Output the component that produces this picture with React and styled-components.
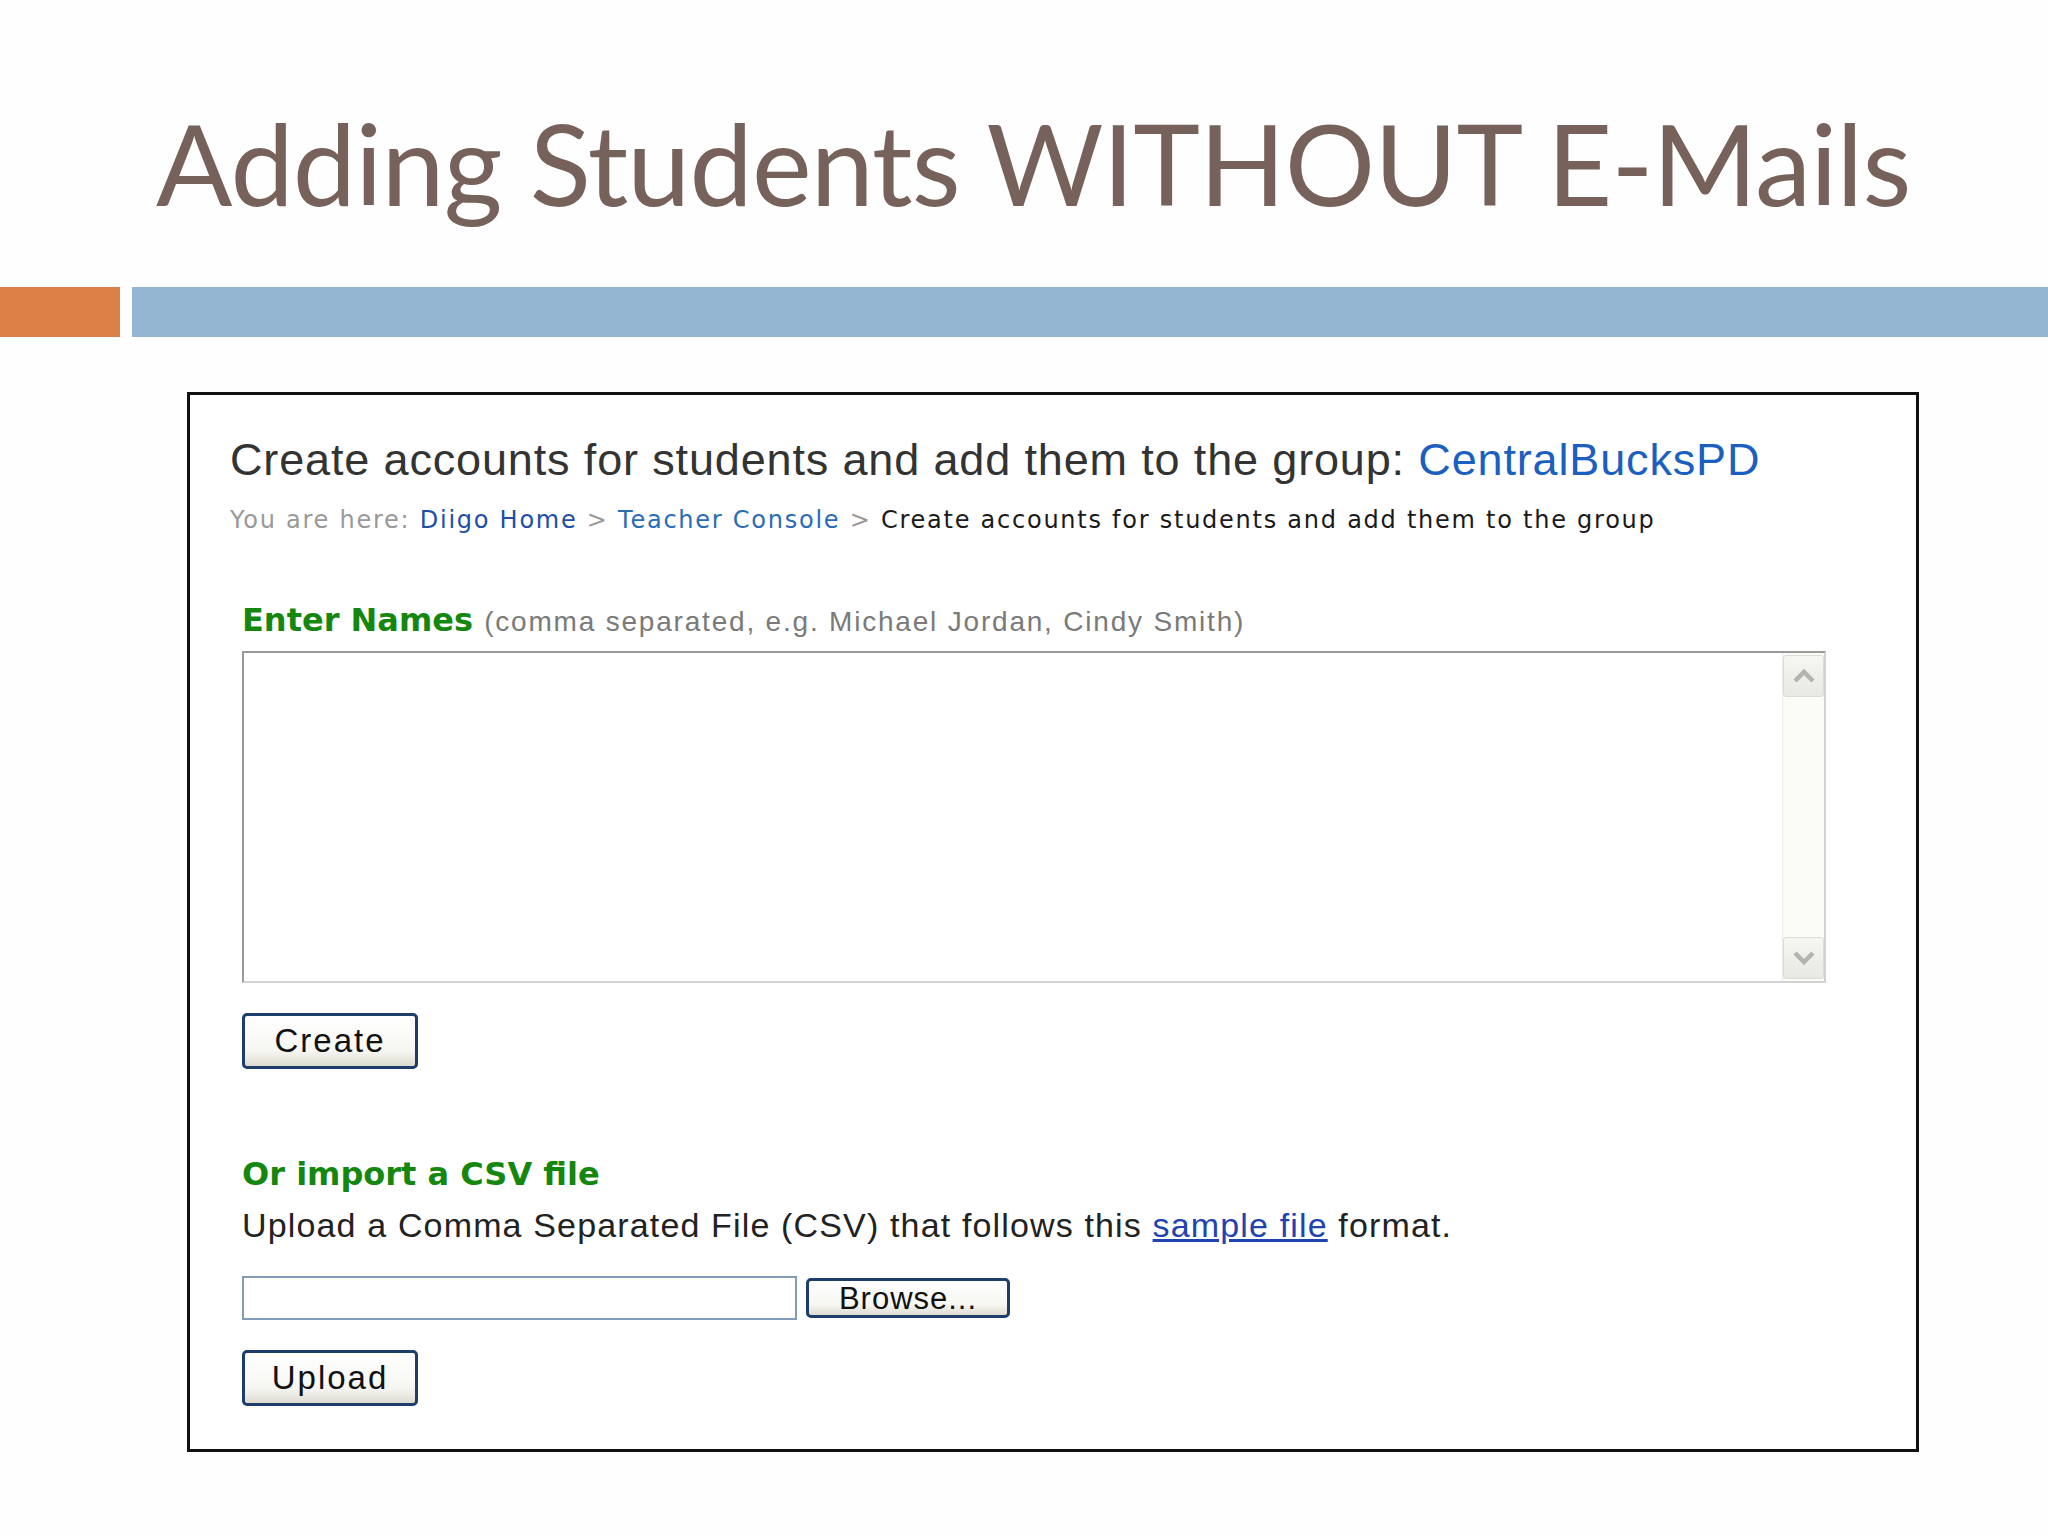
import React from 'react'
import styled, { createGlobalStyle } from 'styled-components'

const GlobalStyle = createGlobalStyle`
  body {
    margin: 0;
    background: #fefefe;
  }
`

const Slide = styled.div`
  width: 2048px;
  height: 1536px;
  overflow: hidden;
  background: #fefefe;
`

const Title = styled.h1`
  margin: 0;
  padding: 106px 0 0 156px;
  font-family: Lato, "Open Sans", sans-serif;
  font-weight: 400;
  font-size: 113px;
  line-height: 113px;
  letter-spacing: -0.85px;
  color: #76625a;
  white-space: nowrap;
`

const AccentBar = styled.div`
  display: flex;
  gap: 12px;
  height: 50px;
  margin-top: 68px;
`

const Block = styled.div`
  background: ${({ $color }) => $color};
  flex: ${({ $grow }) => ($grow ? 1 : '0 0 120px')};
`

const Shot = styled.section`
  box-sizing: border-box;
  width: 1732px;
  height: 1060px;
  margin: 55px 0 0 187px;
  padding: 42px 0 0 40px;
  border: 3px solid #111;
  background: #fff;
  font-family: "Liberation Sans", Arial, sans-serif;
`

const Heading = styled.h2`
  margin: 0;
  font-weight: 400;
  font-size: 45px;
  line-height: 45px;
  letter-spacing: 0.85px;
  color: #333;
  white-space: nowrap;
`

const GroupName = styled.span`
  color: #1b5fc1;
`

const Crumbs = styled.div`
  margin-top: 26px;
  font-family: "DejaVu Sans", Verdana, sans-serif;
  font-size: 24px;
  line-height: 24px;
  letter-spacing: 1.75px;
  color: #1a1a1a;
  white-space: nowrap;
`

const Muted = styled.span`
  color: #999;
`

const Crumb = styled.span`
  color: ${({ $color }) => $color};
`

const FormArea = styled.div`
  margin-left: 12px;
`

const Label = styled.div`
  margin-top: ${({ $top }) => $top}px;
  font-family: "DejaVu Sans", Verdana, sans-serif;
  font-weight: 700;
  font-size: 32px;
  line-height: 32px;
  color: #14870f;
  white-space: nowrap;
`

const Hint = styled.span`
  font-family: "Liberation Sans", Arial, sans-serif;
  font-weight: 400;
  font-size: 28px;
  letter-spacing: 1.8px;
  color: #7a7a7a;
`

const NamesBox = styled.div`
  box-sizing: border-box;
  display: flex;
  justify-content: flex-end;
  width: 1584px;
  height: 332px;
  margin-top: 13px;
  border: 2px solid #d2d2d2;
  border-top-color: #9a9a9a;
  border-left-color: #9a9a9a;
  background: #fff;
`

const Scrollbar = styled.div`
  display: flex;
  flex-direction: column;
  justify-content: space-between;
  width: 41px;
  padding: 2px 0;
  border-left: 1px solid #ececec;
  background: #fbfbf7;
`

const ScrollButton = styled.div`
  display: flex;
  align-items: center;
  justify-content: center;
  height: 40px;
  border: 1px solid #dcdcd6;
  border-radius: 3px;
  background: linear-gradient(#f6f6f2, #e9e9e3);
`

const Button = styled.button`
  box-sizing: border-box;
  display: block;
  width: ${({ $w }) => $w || 176}px;
  height: ${({ $h }) => $h || 56}px;
  margin-top: ${({ $top }) => $top || 0}px;
  padding: 0;
  border: 3px solid #1d3e6b;
  border-radius: 5px;
  background: linear-gradient(#ffffff, #f6f6f2 70%, #dedbd0);
  font-family: "Liberation Sans", Arial, sans-serif;
  font-size: ${({ $fs }) => $fs || 33}px;
  letter-spacing: ${({ $ls }) => $ls || 2}px;
  color: #111;
`

const UploadText = styled.p`
  margin: 18px 0 0;
  font-size: 34px;
  line-height: 34px;
  letter-spacing: 1.15px;
  color: #222;
  white-space: nowrap;
`

const SampleLink = styled.a`
  color: #1f44b0;
  text-decoration: underline;
`

const FileRow = styled.div`
  display: flex;
  align-items: center;
  gap: 9px;
  margin-top: 34px;
`

const FileField = styled.div`
  box-sizing: border-box;
  width: 555px;
  height: 44px;
  border: 2px solid #7f9db9;
  background: #fff;
`

const Chevron = ({ up }) => (
  <svg width="24" height="16" viewBox="0 0 24 16">
    <path
      d={up ? 'M3 13 L12 4 L21 13' : 'M3 3 L12 12 L21 3'}
      fill="none"
      stroke="#b3b3b0"
      strokeWidth="4.5"
    />
  </svg>
)

const App = () => {
  return (
    <Slide>
      <GlobalStyle />
      <Title>Adding Students WITHOUT E-Mails</Title>
      <AccentBar>
        <Block $color="#dd8047" />
        <Block $color="#94b6d2" $grow />
      </AccentBar>

      <Shot>
        <Heading>
          Create accounts for students and add them to the group: <GroupName>CentralBucksPD</GroupName>
        </Heading>
        <Crumbs>
          <Muted>You are here: </Muted>
          <Crumb $color="#1d4fa8">Diigo Home</Crumb>
          <Muted> &gt; </Muted>
          <Crumb $color="#2a6cb8">Teacher Console</Crumb>
          <Muted> &gt; </Muted>
          Create accounts for students and add them to the group
        </Crumbs>

        <FormArea>
          <Label $top={72}>
            Enter Names <Hint>(comma separated, e.g. Michael Jordan, Cindy Smith)</Hint>
          </Label>
          <NamesBox>
            <Scrollbar>
              <ScrollButton><Chevron up /></ScrollButton>
              <ScrollButton><Chevron /></ScrollButton>
            </Scrollbar>
          </NamesBox>
          <Button $top={30}>Create</Button>

          <Label $top={89}>Or import a CSV file</Label>
          <UploadText>
            Upload a Comma Separated File (CSV) that follows this <SampleLink>sample file</SampleLink> format.
          </UploadText>
          <FileRow>
            <FileField />
            <Button $w={204} $h={40} $fs={31} $ls={1}>Browse...</Button>
          </FileRow>
          <Button $top={30}>Upload</Button>
        </FormArea>
      </Shot>
    </Slide>
  )
}

export default App
